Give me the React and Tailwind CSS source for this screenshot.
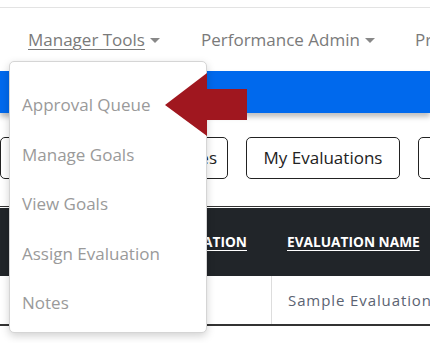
import React from "react";

const font = { fontFamily: "'Open Sans', Lato, sans-serif" };

function Caret() {
  return (
    <svg width="10" height="6" viewBox="0 0 10 6" className="ml-[5px] mt-[2px]">
      <path d="M0 0 L10 0 L5 5 Z" fill="#888" />
    </svg>
  );
}

export default function App() {
  return (
    <div className="relative w-[430px] h-[343px] overflow-hidden bg-white" style={font}>
      <div className="h-[7px]" />
      <div className="h-px bg-[#e3e3e3]" />
      <nav className="h-[63px] flex items-center pl-[28px] text-[17px] text-[#7a7a7a] whitespace-nowrap">
        <div className="flex items-center">
          <span className="underline underline-offset-[3px] decoration-1">Manager Tools </span>
          <Caret />
        </div>
        <div className="flex items-center ml-[41px]">
          <span>Performance Admin</span>
          <Caret />
        </div>
        <div className="ml-[40px]">Profile</div>
      </nav>
      <div className="h-[42px] bg-[#0069ed] shadow-[0_4px_5px_rgba(0,0,0,0.25)]" />
      <div className="flex gap-[18px] mt-[24px] h-[42px] text-[17px] text-[#222] whitespace-nowrap">
        <div className="w-[228px] shrink-0 border border-[#222] rounded-[5px] flex items-center justify-end pr-[10px]">
          My Objectives
        </div>
        <div className="w-[154px] shrink-0 border border-[#222] rounded-[5px] flex items-center justify-center">
          My Evaluations
        </div>
        <div className="w-[154px] shrink-0 border border-[#222] rounded-[5px] flex items-center justify-center">
          Reports
        </div>
      </div>
      <div className="mt-[27px] border-t border-[#333] pt-px">
        <div className="flex h-[68px] bg-[#212529] text-white text-[13.7px] font-bold whitespace-nowrap">
          <div className="w-[272px] shrink-0 flex items-center justify-end pr-[25px]">
            <span className="underline underline-offset-[3px]">DATE OF EVALUATION</span>
          </div>
          <div className="flex-1 min-w-0 flex items-center pl-[15px]">
            <span className="underline underline-offset-[3px]">EVALUATION NAME</span>
          </div>
        </div>
        <div className="flex h-[50px] text-[15px] tracking-[0.9px] text-[#5b6372] whitespace-nowrap border-b-2 border-[#333]">
          <div className="w-[272px] shrink-0 border-r border-[#ddd]" />
          <div className="flex-1 min-w-0 flex items-center pl-[16px]">Sample Evaluation</div>
        </div>
      </div>

      <div className="absolute left-[9px] top-[61px] w-[198px] h-[272px] bg-white border border-[#d5d5d5] rounded-[5px] shadow-[0_3px_8px_rgba(0,0,0,0.18)] pt-[18px] text-[17px] text-[#9a9a9a] whitespace-nowrap">
        {["Approval Queue", "Manage Goals", "View Goals", "Assign Evaluation", "Notes"].map((t) => (
          <div key={t} className="h-[49.5px] flex items-center pl-[12px]">
            {t}
          </div>
        ))}
      </div>

      <svg className="absolute left-0 top-0" width="430" height="343" viewBox="0 0 430 343">
        <path d="M165 105 L207 73 L207 89 L247 89 L247 120 L207 120 L207 136 Z" fill="#a0171f" />
      </svg>
    </div>
  );
}
